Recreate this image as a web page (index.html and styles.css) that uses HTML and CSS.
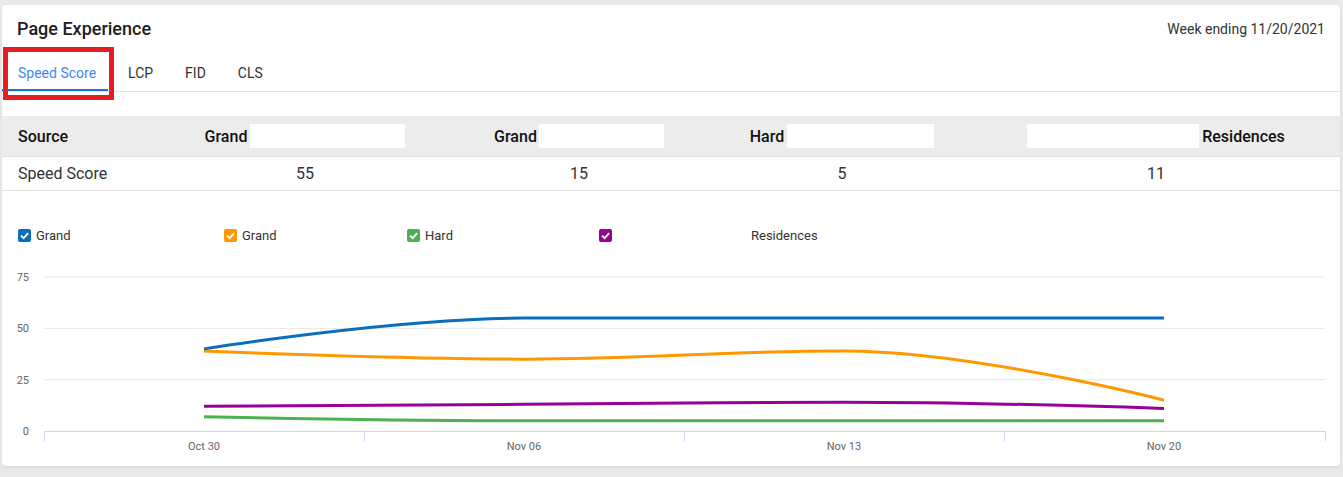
FILE: index.html
```html
<!DOCTYPE html>
<html lang="en">
<head>
<meta charset="utf-8">
<title>Page Experience</title>
<link rel="stylesheet" href="styles.css">
</head>
<body>
<div class="card">
  <div class="card-head">
    <h2 class="title">Page Experience</h2>
    <div class="week">Week ending 11/20/2021</div>
  </div>

  <div class="tabs">
    <div class="tab active">Speed Score<span class="highlight"></span></div>
    <div class="tab">LCP</div>
    <div class="tab">FID</div>
    <div class="tab">CLS</div>
  </div>

  <div class="tbl">
    <div class="tbl-row tbl-head">
      <div class="cell first">Source</div>
      <div class="cell"><span>Grand</span><span class="redact r1"></span></div>
      <div class="cell"><span>Grand</span><span class="redact r2"></span></div>
      <div class="cell"><span>Hard</span><span class="redact r3"></span></div>
      <div class="cell"><span class="redact r4"></span><span>Residences</span></div>
    </div>
    <div class="tbl-row tbl-body">
      <div class="cell first">Speed Score</div>
      <div class="cell">55</div>
      <div class="cell">15</div>
      <div class="cell">5</div>
      <div class="cell">11</div>
    </div>
  </div>

  <div class="legend">
    <div class="lg-item">
      <svg class="cb" viewBox="0 0 13 13"><rect width="13" height="13" rx="2" fill="#0a6ebd"/><path d="M3 6.6 L5.6 9.1 L10.2 4.1" fill="none" stroke="#fff" stroke-width="1.9"/></svg>
      <span>Grand</span>
    </div>
    <div class="lg-item">
      <svg class="cb" viewBox="0 0 13 13"><rect width="13" height="13" rx="2" fill="#ff9800"/><path d="M3 6.6 L5.6 9.1 L10.2 4.1" fill="none" stroke="#fff" stroke-width="1.9"/></svg>
      <span>Grand</span>
    </div>
    <div class="lg-item">
      <svg class="cb" viewBox="0 0 13 13"><rect width="13" height="13" rx="2" fill="#4caf50"/><path d="M3 6.6 L5.6 9.1 L10.2 4.1" fill="none" stroke="#fff" stroke-width="1.9"/></svg>
      <span>Hard</span>
    </div>
    <div class="lg-item">
      <svg class="cb" viewBox="0 0 13 13"><rect width="13" height="13" rx="2" fill="#990099"/><path d="M3 6.6 L5.6 9.1 L10.2 4.1" fill="none" stroke="#fff" stroke-width="1.9"/></svg>
      <span class="lg-far">Residences</span>
    </div>
  </div>

  <svg class="chart" width="1338" height="208" viewBox="2 258 1338 208">
    <g class="grid">
      <line x1="44" y1="277" x2="1325" y2="277"/>
      <line x1="44" y1="328.33" x2="1325" y2="328.33"/>
      <line x1="44" y1="379.67" x2="1325" y2="379.67"/>
    </g>
    <g class="axis">
      <line x1="44" y1="431.5" x2="1325" y2="431.5"/>
      <line x1="44.5" y1="431" x2="44.5" y2="441"/>
      <line x1="364.5" y1="431" x2="364.5" y2="441"/>
      <line x1="684.5" y1="431" x2="684.5" y2="441"/>
      <line x1="1004.5" y1="431" x2="1004.5" y2="441"/>
      <line x1="1325.5" y1="431" x2="1325.5" y2="441"/>
    </g>
    <g class="ylab">
      <text x="29" y="281">75</text>
      <text x="29" y="332">50</text>
      <text x="29" y="384">25</text>
      <text x="29" y="435">0</text>
    </g>
    <g class="xlab">
      <text x="204" y="450">Oct 30</text>
      <text x="524" y="450">Nov 06</text>
      <text x="844" y="450">Nov 13</text>
      <text x="1164" y="450">Nov 20</text>
    </g>
    <g class="series">
      <path stroke="#4caf50" d="M204 416.63 C204 416.63 396 420.73 524 420.73 C652 420.73 716 420.73 844 420.73 C972 420.73 1164 420.73 1164 420.73"/>
      <path stroke="#990099" d="M204 406.36 C204 406.36 396 405.13 524 404.31 C652 403.48 716 402.25 844 402.25 C972 402.25 1164 408.41 1164 408.41"/>
      <path stroke="#ff9800" d="M204 350.92 C204 350.92 396 359.13 524 359.13 C652 359.13 716 350.92 844 350.92 C972 350.92 1164 400.2 1164 400.2"/>
      <path stroke="#0a6ebd" d="M204 348.87 C204 348.87 396 318.07 524 318.07 C652 318.07 716 318.07 844 318.07 C972 318.07 1164 318.07 1164 318.07"/>
    </g>
  </svg>
</div>
</body>
</html>
```

FILE: styles.css
```css
* { box-sizing: border-box; }

html, body {
  margin: 0;
  padding: 0;
  background: #e9e9e9;
  font-family: Roboto, "Liberation Sans", Arial, sans-serif;
  color: #333;
}

body {
  padding: 5px 3px 0 2px;
  height: 477px;
  overflow: hidden;
}

.card {
  width: 1338px;
  background: #fff;
  border-radius: 4px;
  box-shadow: 0 2px 3px rgba(0, 0, 0, 0.06);
}

.card-head {
  display: flex;
  justify-content: space-between;
  align-items: center;
  padding: 9px 15px 11px 15px;
  height: 50px;
}

.title {
  margin: 0;
  font-size: 18px;
  font-weight: 500;
  line-height: 30px;
  color: #212121;
}

.week {
  font-size: 14px;
  line-height: 30px;
  color: #333;
}

.tabs {
  display: flex;
  height: 37px;
  border-bottom: 1px solid #e2e2e2;
}

.tab {
  position: relative;
  padding: 0 16px;
  height: 36px;
  line-height: 36px;
  font-size: 14px;
  color: #333;
}

.tab.active {
  color: #3f87f5;
}

.tab.active::after {
  content: "";
  position: absolute;
  left: 0;
  right: 4px;
  bottom: 0;
  height: 2px;
  background: #1a73e8;
}

.highlight {
  position: absolute;
  left: 1px;
  top: -8px;
  width: 111px;
  height: 53px;
  border: 5px solid #e51d25;
  pointer-events: none;
  z-index: 1;
}

.tbl {
  margin-top: 24px;
}

.tbl-row {
  display: grid;
  grid-template-columns: 162px 282px 266px 260px 1fr;
  border-bottom: 1px solid #dedede;
}

.tbl-head {
  height: 41px;
  background: #ececec;
  font-size: 16px;
  font-weight: 500;
  color: #111;
}

.tbl-body {
  height: 34px;
  font-size: 16px;
  color: #333;
}

.cell {
  display: flex;
  align-items: center;
  justify-content: center;
}

.cell.first {
  justify-content: flex-start;
  padding-left: 16px;
}

.redact {
  display: inline-block;
  height: 24px;
  background: #fff;
}

.r1 { width: 155px; margin-left: 3px; }
.r2 { width: 125px; margin-left: 2px; }
.r3 { width: 147px; margin-left: 3px; }
.r4 { width: 172px; margin-right: 3px; }

.legend {
  display: grid;
  grid-template-columns: 206px 183px 192px auto;
  margin-top: 35px;
  padding-left: 16px;
  height: 18px;
  font-size: 13px;
  color: #333;
}

.lg-item {
  display: flex;
  align-items: center;
  gap: 5px;
}

.cb {
  width: 13px;
  height: 13px;
  flex: none;
}

.lg-far {
  margin-left: 134px;
}

.chart {
  display: block;
  margin-top: 14px;
}

.grid line {
  stroke: #e6e6e6;
  stroke-width: 1;
}

.axis line {
  stroke: #ccd6eb;
  stroke-width: 1;
}

.ylab text,
.xlab text {
  font-family: Roboto, "Liberation Sans", Arial, sans-serif;
  font-size: 11px;
  fill: #666;
}

.ylab text { text-anchor: end; }
.xlab text { text-anchor: middle; }

.series path {
  fill: none;
  stroke-width: 3;
  stroke-linecap: butt;
  stroke-linejoin: round;
}
```
